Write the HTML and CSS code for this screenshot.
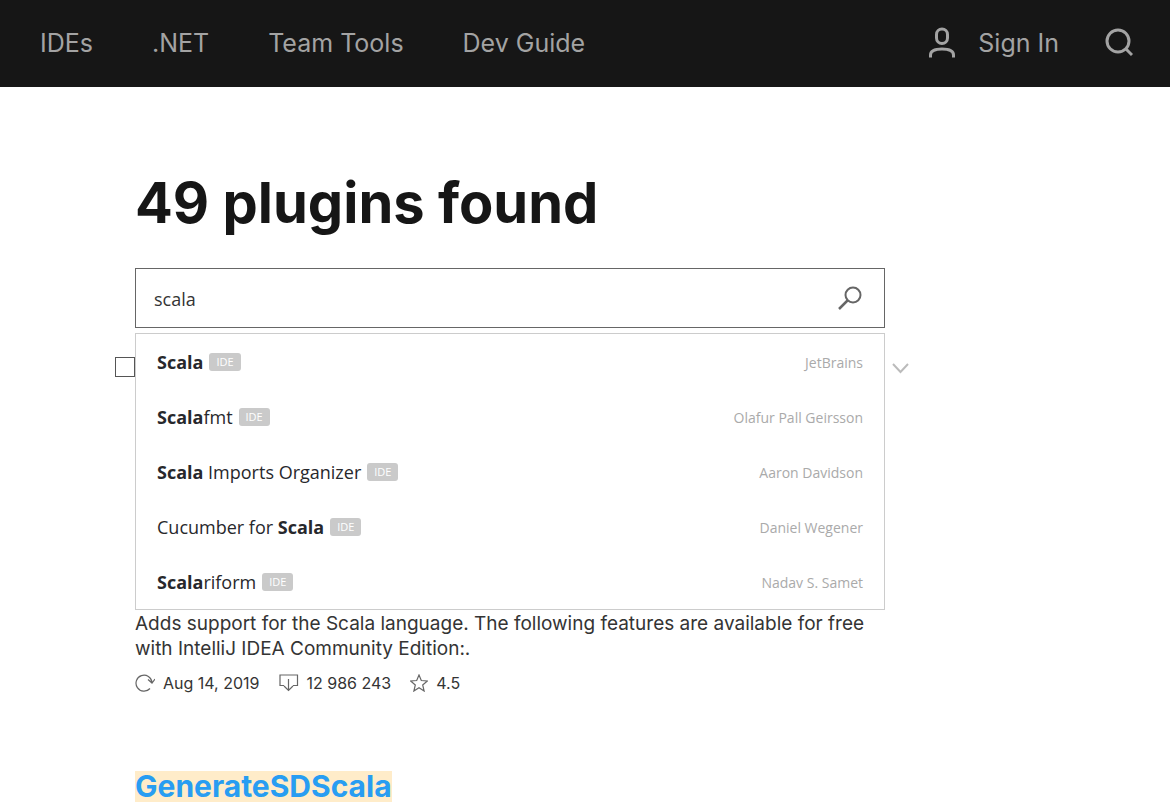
FILE: index.html
```html
<!DOCTYPE html>
<html lang="en">

<head>
  <meta charset="utf-8">
  <meta name="viewport" content="width=device-width, initial-scale=1">
  <title>Plugins search</title>
  <link rel="stylesheet" href="styles.css">
</head>

<body>
  <header class="header">
    <nav class="menu">
      <a href="#">IDEs</a>
      <a href="#">.NET</a>
      <a href="#">Team Tools</a>
      <a href="#">Dev Guide</a>
    </nav>
    <div class="tools">
      <a href="#" class="sign-in">
        <svg width="28" height="32" viewBox="0 0 28 32" fill="none" stroke="currentColor" stroke-width="3">
          <rect x="8.500" y="2" width="11" height="14.500" rx="5.500"/>
          <path d="M2.500 30.500v-2.500c0-4 4-6 11.500-6s11.500 2 11.500 6v2.500"/>
        </svg>
        Sign In
      </a>
      <button type="button" class="header-search" aria-label="Search site">
        <svg width="28" height="30" viewBox="0 0 28 30" fill="none" stroke="currentColor" stroke-width="3">
          <circle cx="13" cy="13" r="11"/>
          <path d="M20.500 20.500l6.500 6.500"/>
        </svg>
      </button>
    </div>
  </header>

  <main class="page">
    <h1>49 plugins found</h1>

    <form class="search">
      <input type="text" class="search-input" value="scala" aria-label="Search plugins">
      <button type="submit" class="search-button" aria-label="Search">
        <svg width="24" height="24" viewBox="0 0 24 24" fill="none" stroke="currentColor" stroke-width="2">
          <circle cx="15" cy="9" r="7.500"/>
          <path d="M9.500 14.500l-8.500 8.500" stroke-width="2.500"/>
        </svg>
      </button>
      <ul class="suggest">
        <li><a href="#"><span class="name"><b>Scala</b></span><span class="tag">IDE</span><span class="vendor">JetBrains</span></a></li>
        <li><a href="#"><span class="name"><b>Scala</b>fmt</span><span class="tag">IDE</span><span class="vendor">Olafur Pall Geirsson</span></a></li>
        <li><a href="#"><span class="name"><b>Scala</b> Imports Organizer</span><span class="tag">IDE</span><span class="vendor">Aaron Davidson</span></a></li>
        <li><a href="#"><span class="name">Cucumber for <b>Scala</b></span><span class="tag">IDE</span><span class="vendor">Daniel Wegener</span></a></li>
        <li><a href="#"><span class="name"><b>Scala</b>riform</span><span class="tag">IDE</span><span class="vendor">Nadav S. Samet</span></a></li>
      </ul>
    </form>

    <div class="filters">
      <input type="checkbox" class="check" aria-label="Filter results">
      <button type="button" class="sort" aria-label="Sort order">
        <svg width="17" height="12" viewBox="0 0 17 12" fill="none" stroke="currentColor" stroke-width="2">
          <path d="M1 2l7.500 8L16 2"/>
        </svg>
      </button>
    </div>

    <article class="plugin">
      <p class="description">Adds support for the Scala language. The following features are available for free with IntelliJ IDEA Community Edition:.</p>
      <ul class="stats">
        <li>
          <svg width="20" height="18" viewBox="0 0 20 18" fill="none" stroke="currentColor" stroke-width="1.200">
            <path d="M15 14.500A8 8 0 1 1 17 8.500M13 5.500l4 3.500 3-4"/>
          </svg>
          Aug 14, 2019
        </li>
        <li>
          <svg width="20" height="18" viewBox="0 0 20 18" fill="none" stroke="currentColor" stroke-width="1.200">
            <path d="M5 11.500H1V1h17.500v10.500H14M9.500 5v11.500M5 12l4.500 4.500L14 12"/>
          </svg>
          12 986 243
        </li>
        <li>
          <svg width="18" height="18" viewBox="0 0 18 18" fill="none" stroke="currentColor" stroke-width="1.200">
            <path d="M9 1l2.300 5.500 6 .500-4.600 4 1.400 6L9 13.800 3.900 17l1.400-6L.700 7l6-.500z"/>
          </svg>
          4.5
        </li>
      </ul>
    </article>

    <article class="plugin">
      <h2><a href="#"><mark>GenerateSDScala</mark></a></h2>
    </article>
  </main>
</body>

</html>
```
FILE: styles.css
```css
* {
  box-sizing: border-box;
}

body {
  margin: 0;
  background: #fff;
  color: #343434;
  font-family: Inter, "Open Sans", sans-serif;
}

a {
  color: inherit;
  text-decoration: none;
}

ul {
  margin: 0;
  padding: 0;
  list-style: none;
}

button {
  padding: 0;
  border: 0;
  background: none;
  color: inherit;
  cursor: pointer;
}

svg {
  display: block;
  flex: none;
}

.header {
  display: flex;
  justify-content: space-between;
  align-items: center;
  height: 87px;
  padding: 0 37px 2px 40px;
  background: #161616;
  color: #a3a3a3;
  font-size: 25px;
}

.menu {
  display: flex;
  gap: 59px;
}

.tools, .sign-in {
  display: flex;
  align-items: center;
}

.tools {
  gap: 46px;
}

.sign-in {
  gap: 22px;
}

.page {
  max-width: 900px;
  margin: 0 auto;
  padding-top: 82px;
}

h1 {
  margin: 0 0 31px;
  color: #161616;
  font-size: 56px;
  line-height: 68px;
}

.search, .plugin {
  max-width: 750px;
}

.search {
  position: relative;
  display: flex;
  height: 60px;
  border: 1px solid #666;
}

.search-input {
  flex: 1;
  min-width: 0;
  padding: 2px 18px 0;
  border: 0;
  outline: 0;
  background: none;
  color: #343434;
  font-family: "Open Sans", sans-serif;
  font-size: 18px;
}

.search-button {
  padding: 0 22px;
  color: #666;
}

.suggest {
  position: absolute;
  top: 64px;
  left: -1px;
  right: -1px;
  z-index: 1;
  border: 1px solid #ccc;
  background: #fff;
  font-family: "Open Sans", sans-serif;
  font-size: 18px;
}

.suggest a {
  display: flex;
  align-items: center;
  height: 55px;
  padding: 0 21px;
  color: #27282c;
}

.tag {
  margin-left: 6px;
  padding: 0 7px;
  border-radius: 3px;
  background: #cacaca;
  color: #fff;
  font-size: 11px;
  line-height: 18px;
}

.vendor {
  margin-left: auto;
  padding-top: 2px;
  color: #aaa;
  font-size: 14px;
}

.filters {
  display: flex;
  justify-content: space-between;
  align-items: center;
  max-width: 794px;
  margin: 29px 0 234px -20px;
}

.check {
  appearance: none;
  width: 20px;
  height: 20px;
  margin: 0;
  border: 1px solid #555;
  background: #fff;
}

.sort {
  padding-top: 2px;
  color: #bbb;
}

.description {
  margin: 0;
  font-size: 19px;
  line-height: 25px;
}

.stats {
  display: flex;
  gap: 19px;
  margin: 12px 0 78px;
  font-size: 16px;
  line-height: 20px;
}

.stats li {
  display: flex;
  align-items: center;
  gap: 8px;
}

.stats svg {
  color: #666;
}

h2 {
  margin: 0;
  font-size: 30px;
  line-height: 31px;
}

mark {
  display: inline-block;
  background: #ffecc9;
  color: #289df2;
}
```
